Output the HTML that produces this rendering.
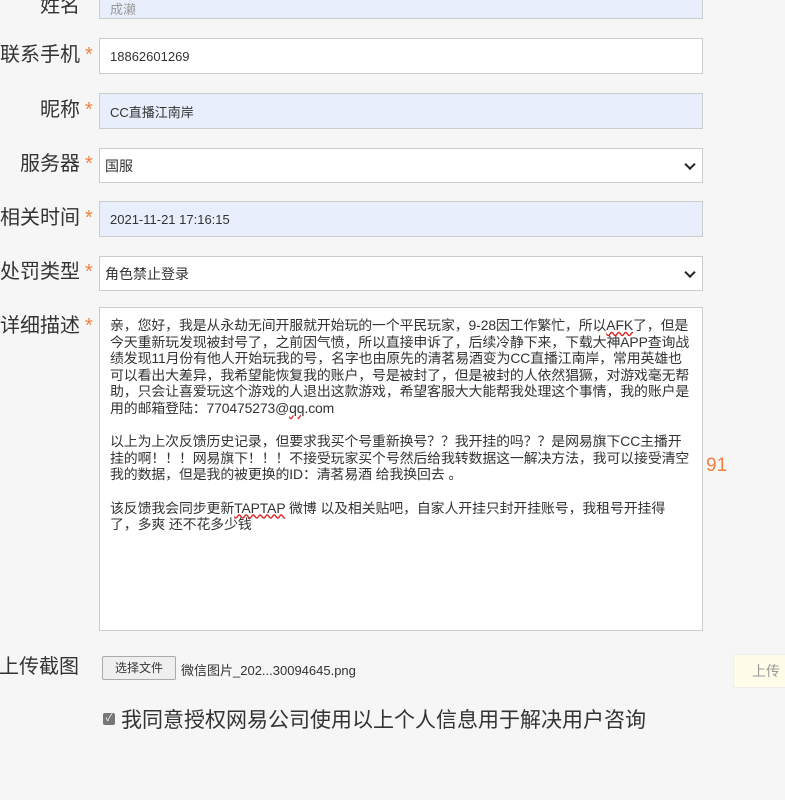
<!DOCTYPE html>
<html><head><meta charset="utf-8"><style>
body{margin:0;width:785px;height:800px;background:#f6f6f6;position:relative;overflow:hidden;font-family:"Liberation Sans","Noto Sans CJK SC",sans-serif;}
.l{position:absolute;right:705px;font-size:20px;color:#333;line-height:24px;white-space:nowrap}
.l b{position:absolute;left:100%;margin-left:5px;color:#f08040;font-weight:normal}
.i{position:absolute;left:99px;width:604px;border:1px solid #ccc;box-sizing:border-box;font-size:13px;color:#333;padding-left:10px;display:flex;align-items:center;background:#fff}
.b{background:#e8eefb}
.s{padding-left:5px;font-size:14px}
.s:after{content:"";position:absolute;right:8px;top:50%;width:6px;height:6px;border-right:2px solid #222;border-bottom:2px solid #222;transform:translateY(-70%) rotate(45deg)}
.ta{position:absolute;left:99px;top:307px;width:604px;height:324px;border:1px solid #ccc;box-sizing:border-box;background:#fff;padding:9px 10px;font-size:13.9px;line-height:16.6px;color:#333;white-space:nowrap;letter-spacing:-0.1px}
.ta p{margin:0 0 16.6px}
u{text-decoration:underline wavy #d22;}
</style></head><body>
<div class="l" style="top:-6px">姓名</div>
<div class="i b" style="top:-2px;height:21px;color:#999">成濑</div>
<div class="l" style="top:43px">联系手机<b>*</b></div>
<div class="i" style="top:38px;height:36px">18862601269</div>
<div class="l" style="top:98px">昵称<b>*</b></div>
<div class="i b" style="top:93px;height:36px">CC直播江南岸</div>
<div class="l" style="top:152px">服务器<b>*</b></div>
<div class="i s" style="top:148px;height:35px">国服</div>
<div class="l" style="top:206px">相关时间<b>*</b></div>
<div class="i b" style="top:201px;height:36px">2021-11-21 17:16:15</div>
<div class="l" style="top:260px">处罚类型<b>*</b></div>
<div class="i s" style="top:256px;height:35px">角色禁止登录</div>
<div class="l" style="top:314px">详细描述<b>*</b></div>
<div class="ta"><p>亲，您好，我是从永劫无间开服就开始玩的一个平民玩家，9-28因工作繁忙，所以<u>AFK</u>了，但是<br>今天重新玩发现被封号了，之前因气愤，所以直接申诉了，后续冷静下来，下载大神APP查询战<br>绩发现11月份有他人开始玩我的号，名字也由原先的清茗易酒变为CC直播江南岸，常用英雄也<br>可以看出大差异，我希望能恢复我的账户，号是被封了，但是被封的人依然猖獗，对游戏毫无帮<br>助，只会让喜爱玩这个游戏的人退出这款游戏，希望客服大大能帮我处理这个事情，我的账户是<br>用的邮箱登陆：770475273@<u>qq</u>.com</p><p>以上为上次反馈历史记录，但要求我买个号重新换号？？我开挂的吗？？是网易旗下CC主播开<br>挂的啊！！！网易旗下！！！不接受玩家买个号然后给我转数据这一解决方法，我可以接受清空<br>我的数据，但是我的被更换的ID：清茗易酒 给我换回去 。</p><p>该反馈我会同步更新<u>TAPTAP</u> 微博 以及相关贴吧，自家人开挂只封开挂账号，我租号开挂得<br>了，多爽 还不花多少钱</p></div>
<div style="position:absolute;left:706px;top:455px;font-size:19px;color:#f08040">91</div>
<div class="l" style="top:655px;right:706px">上传截图</div>
<div style="position:absolute;left:102px;top:656px;width:74px;height:24px;border:1px solid #aaa;border-radius:2px;background:#efefef;box-sizing:border-box;font-size:12px;color:#333;text-align:center;line-height:22px">选择文件</div>
<div style="position:absolute;left:181px;top:660px;font-size:13px;color:#333">微信图片_202...30094645.png</div>
<div style="position:absolute;left:733px;top:654px;width:60px;height:34px;background:#fffde8;border:1px solid #eee;box-sizing:border-box;font-size:14px;color:#999;line-height:32px;padding-left:18px">上传</div>
<div style="position:absolute;left:103px;top:713px;width:12px;height:12px;background:#777;border-radius:2px;color:#fff;font-size:10px;line-height:12px;text-align:center">✓</div>
<div style="position:absolute;left:121px;top:704px;font-size:21px;color:#333">我同意授权网易公司使用以上个人信息用于解决用户咨询</div>
</body></html>
